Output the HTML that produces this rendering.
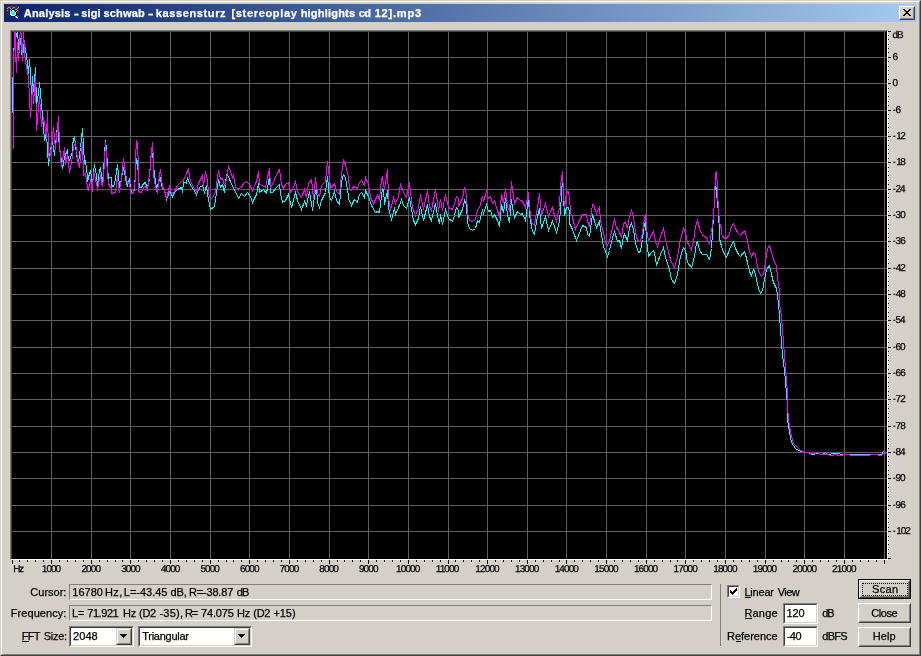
<!DOCTYPE html><html><head><meta charset="utf-8"><title>Analysis</title><style>
html,body{margin:0;padding:0}
body{width:921px;height:656px;background:#d4d0c8;position:relative;overflow:hidden;
 font-family:"Liberation Sans",sans-serif;font-size:11px;color:#000;line-height:13px}
div,span{position:absolute;box-sizing:border-box;white-space:pre}
.t{height:13px;line-height:13px;-webkit-text-stroke:0.25px currentColor}
u{text-decoration:none;border-bottom:1px solid #000;display:inline-block;height:13px;line-height:13px}
.sunk1{border:1px solid;border-color:#808080 #fff #fff #808080;background:#d4d0c8}
.sunk2{border:1px solid;border-color:#808080 #fff #fff #808080;background:#fff}
.sunk2:before{content:"";position:absolute;left:0;top:0;right:0;bottom:0;border:1px solid;border-color:#404040 #d4d0c8 #d4d0c8 #404040}
.btn{border:1px solid;border-color:#fff #404040 #404040 #fff;background:#d4d0c8;text-align:center}
.btn:before{content:"";position:absolute;left:0;top:0;right:0;bottom:0;border:1px solid;border-color:#d4d0c8 #808080 #808080 #d4d0c8}
.cbtn{border:1px solid;border-color:#d4d0c8 #404040 #404040 #d4d0c8;background:#d4d0c8}
.cbtn:before{content:"";position:absolute;left:0;top:0;right:0;bottom:0;border:1px solid;border-color:#fff #808080 #808080 #fff}
.arr{width:0;height:0;border-left:4px solid transparent;border-right:4px solid transparent;border-top:4px solid #000}
</style></head><body><div id="w" style="left:0;top:0;width:921px;height:656px;will-change:transform">
<div style="left:0;top:0;width:921px;height:656px;border:1px solid;border-color:#d4d0c8 #404040 #404040 #d4d0c8"></div>
<div style="left:1px;top:1px;width:919px;height:654px;border:1px solid;border-color:#fff #808080 #808080 #fff"></div>
<div style="left:4px;top:4px;width:913px;height:18px;background:linear-gradient(to right,#0a246a,#a6caf0)"></div>
<div id="title" style="left:0;top:0"><span class="t" style="left:23.83px;top:7px;letter-spacing:0.183px;font-weight:bold;color:#fff;">Analysis</span> <span class="t" style="left:73.73px;top:7px;letter-spacing:0.000px;font-weight:bold;color:#fff;transform:scaleX(1.325);transform-origin:0 0;">-</span> <span class="t" style="left:81.21px;top:7px;letter-spacing:0.139px;font-weight:bold;color:#fff;">sigi</span> <span class="t" style="left:103.51px;top:7px;letter-spacing:0.158px;font-weight:bold;color:#fff;">schwab</span> <span class="t" style="left:147.77px;top:7px;letter-spacing:0.000px;font-weight:bold;color:#fff;transform:scaleX(1.468);transform-origin:0 0;">-</span> <span class="t" style="left:155.63px;top:7px;letter-spacing:0.638px;font-weight:bold;color:#fff;">kassensturz</span> <span class="t" style="left:231.48px;top:7px;letter-spacing:0.669px;font-weight:bold;color:#fff;">[stereoplay</span> <span class="t" style="left:300.63px;top:7px;letter-spacing:0.208px;font-weight:bold;color:#fff;">highlights</span> <span class="t" style="left:358.77px;top:7px;letter-spacing:-0.582px;font-weight:bold;color:#fff;">cd</span> <span class="t" style="left:374.71px;top:7px;letter-spacing:0.803px;font-weight:bold;color:#fff;">12].mp3</span></div>
<svg style="position:absolute;left:6px;top:5px" width="16" height="16" viewBox="6 5 16 16" shape-rendering="crispEdges"><path d="M7 6h1v1h-1zM7 7h1v1h-1zM7 9h1v1h-1zM7 11h1v1h-1zM7 12h1v1h-1zM7 13h1v1h-1zM8 6h1v1h-1zM8 8h1v1h-1zM8 9h1v1h-1zM8 10h1v1h-1zM8 11h1v1h-1zM8 12h1v1h-1zM8 13h1v1h-1zM9 6h1v1h-1zM9 8h1v1h-1zM9 9h1v1h-1zM9 10h1v1h-1zM10 6h1v1h-1zM10 7h1v1h-1zM10 9h1v1h-1zM11 6h1v1h-1zM11 7h1v1h-1zM11 8h1v1h-1zM12 6h1v1h-1zM12 7h1v1h-1zM13 6h1v1h-1zM13 8h1v1h-1zM14 6h1v1h-1zM14 8h1v1h-1zM14 9h1v1h-1zM15 6h1v1h-1zM15 7h1v1h-1zM15 8h1v1h-1zM15 10h1v1h-1zM16 6h1v1h-1zM16 7h1v1h-1zM16 8h1v1h-1zM16 10h1v1h-1zM17 6h1v1h-1zM17 7h1v1h-1zM17 9h1v1h-1zM17 11h1v1h-1zM17 12h1v1h-1zM17 13h1v1h-1zM18 6h1v1h-1zM18 8h1v1h-1zM18 9h1v1h-1zM18 10h1v1h-1zM18 11h1v1h-1zM18 12h1v1h-1zM18 13h1v1h-1z" fill="#800080"/><path d="M7 8h1v1h-1zM7 10h1v1h-1zM8 7h1v1h-1zM9 7h1v1h-1zM10 8h1v1h-1zM10 10h1v1h-1zM11 9h1v1h-1zM12 8h1v1h-1zM13 7h1v1h-1zM14 7h1v1h-1zM15 9h1v1h-1zM16 9h1v1h-1zM16 11h1v1h-1zM17 8h1v1h-1zM17 10h1v1h-1zM18 7h1v1h-1z" fill="#00ff00"/><path d="M9 11h1v1h-1zM9 12h1v1h-1zM9 13h1v1h-1zM10 15h1v1h-1zM11 10h1v1h-1zM11 16h1v1h-1zM12 9h1v1h-1zM12 16h1v1h-1zM13 9h1v1h-1zM13 16h1v1h-1zM14 10h1v1h-1zM14 16h1v1h-1zM15 11h1v1h-1zM16 12h1v1h-1zM16 13h1v1h-1zM16 14h1v1h-1z" fill="#000000"/><path d="M10 11h1v1h-1zM10 12h1v1h-1zM10 13h1v1h-1zM10 14h1v1h-1zM11 14h1v1h-1zM11 15h1v1h-1zM12 10h1v1h-1zM12 15h1v1h-1zM13 10h1v1h-1zM13 11h1v1h-1zM13 15h1v1h-1zM14 15h1v1h-1zM15 12h1v1h-1zM15 13h1v1h-1zM15 14h1v1h-1zM16 17h1v1h-1zM17 17h1v1h-1z" fill="#ffffff"/><path d="M11 11h1v1h-1zM11 12h1v1h-1zM11 13h1v1h-1zM12 11h1v1h-1zM12 12h1v1h-1zM12 13h1v1h-1zM12 14h1v1h-1zM13 12h1v1h-1zM13 13h1v1h-1zM13 14h1v1h-1zM14 11h1v1h-1zM14 12h1v1h-1zM14 13h1v1h-1zM14 14h1v1h-1zM15 16h1v1h-1zM16 16h1v1h-1z" fill="#00ffff"/><path d="M15 15h1v1h-1z" fill="#0000ff"/><path d="M15 17h1v1h-1zM17 15h1v1h-1zM17 18h1v1h-1zM18 16h1v1h-1z" fill="#a000a0"/></svg>
<div class="btn" style="left:899px;top:6px;width:16px;height:14px"></div>
<svg style="position:absolute;left:903px;top:9px" width="8" height="7" viewBox="0 0 8 7" shape-rendering="crispEdges"><path d="M0 0h2v1h1v1h2v-1h1v-1h2v1h-1v1h-1v1h-1v1h1v1h1v1h1v1h-2v-1h-1v-1h-2v1h-1v1h-2v-1h1v-1h1v-1h1v-1h-1v-1h-1v-1h-1z" fill="#000"/></svg>
<div style="left:10px;top:30px;width:878px;height:530px;background:#000;border:1px solid;border-color:#808080 #fff #fff #808080"></div>
<div style="left:11px;top:31px;width:876px;height:528px;border:1px solid;border-color:#404040 #000 #000 #404040"></div>
<svg style="position:absolute;left:12px;top:32px" width="875" height="527" viewBox="12 32 875 527"><path d="M51.5 32V559M91.5 32V559M130.5 32V559M170.5 32V559M210.5 32V559M249.5 32V559M289.5 32V559M329.5 32V559M368.5 32V559M408.5 32V559M448.5 32V559M487.5 32V559M527.5 32V559M566.5 32V559M606.5 32V559M646.5 32V559M685.5 32V559M725.5 32V559M765.5 32V559M804.5 32V559M844.5 32V559M884.5 32V559M12 57.5H887M12 83.5H887M12 110.5H887M12 136.5H887M12 162.5H887M12 189.5H887M12 215.5H887M12 241.5H887M12 268.5H887M12 294.5H887M12 320.5H887M12 347.5H887M12 373.5H887M12 399.5H887M12 426.5H887M12 452.5H887M12 478.5H887M12 505.5H887M12 531.5H887" stroke="#606060" stroke-width="1" fill="none" shape-rendering="crispEdges"/><path d="M12.5 112.5 L12.5 101.5 L12.5 101.5 L13.5 53.5 L13.5 50.5 L14.5 45.5 L15.5 33.5 L16.5 36.5 L17.5 30.5 L18.5 46.5 L19.5 52.5 L20.5 38.5 L21.5 48.5 L22.5 60.5 L23.5 45.5 L24.5 43.5 L25.5 49.5 L26.5 55.5 L27.5 64.5 L28.5 73.5 L29.5 59.5 L30.5 73.5 L31.5 95.5 L32.5 76.5 L33.5 91.5 L34.5 81.5 L35.5 67.5 L36.5 105.5 L38.5 93.5 L39.5 82.5 L41.5 104.5 L43.5 127.5 L44.5 140.5 L46.5 133.5 L47.5 150.5 L48.5 165.5 L50.5 149.5 L52.5 141.5 L54.5 155.5 L57.5 125.5 L59.5 147.5 L62.5 168.5 L64.5 157.5 L67.5 149.5 L68.5 162.5 L70.5 157.5 L72.5 151.5 L72.5 144.5 L74.5 136.5 L76.5 154.5 L78.5 162.5 L80.5 147.5 L82.5 128.5 L84.5 163.5 L85.5 160.5 L86.5 169.5 L87.5 176.5 L87.5 181.5 L89.5 173.5 L90.5 171.5 L91.5 176.5 L92.5 186.5 L93.5 172.5 L94.5 164.5 L95.5 170.5 L96.5 175.5 L97.5 185.5 L98.5 178.5 L99.5 170.5 L100.5 167.5 L101.5 176.5 L102.5 182.5 L103.5 172.5 L104.5 154.5 L105.5 140.5 L106.5 149.5 L107.5 166.5 L108.5 178.5 L109.5 177.5 L111.5 177.5 L111.5 185.5 L113.5 186.5 L114.5 183.5 L115.5 178.5 L117.5 164.5 L118.5 174.5 L119.5 187.5 L120.5 184.5 L121.5 177.5 L123.5 168.5 L124.5 171.5 L125.5 178.5 L127.5 186.5 L128.5 181.5 L129.5 179.5 L130.5 187.5 L131.5 192.5 L134.5 191.5 L135.5 169.5 L136.5 158.5 L137.5 161.5 L138.5 178.5 L139.5 187.5 L141.5 187.5 L143.5 183.5 L145.5 182.5 L146.5 186.5 L148.5 184.5 L149.5 178.5 L150.5 162.5 L151.5 150.5 L153.5 160.5 L153.5 164.5 L154.5 174.5 L155.5 181.5 L156.5 187.5 L158.5 183.5 L159.5 178.5 L160.5 177.5 L161.5 185.5 L163.5 189.5 L164.5 190.5 L166.5 199.5 L169.5 191.5 L172.5 196.5 L174.5 192.5 L177.5 189.5 L181.5 187.5 L182.5 192.5 L183.5 181.5 L186.5 183.5 L187.5 177.5 L189.5 183.5 L193.5 189.5 L196.5 194.5 L199.5 187.5 L202.5 185.5 L204.5 192.5 L206.5 185.5 L207.5 194.5 L210.5 209.5 L214.5 206.5 L216.5 192.5 L218.5 179.5 L220.5 187.5 L222.5 184.5 L224.5 192.5 L226.5 174.5 L228.5 176.5 L231.5 184.5 L233.5 187.5 L235.5 192.5 L238.5 197.5 L238.5 198.5 L241.5 193.5 L244.5 196.5 L247.5 192.5 L250.5 196.5 L252.5 202.5 L256.5 194.5 L258.5 183.5 L259.5 192.5 L263.5 189.5 L266.5 193.5 L269.5 176.5 L270.5 192.5 L272.5 192.5 L276.5 187.5 L279.5 184.5 L280.5 193.5 L282.5 202.5 L285.5 200.5 L288.5 194.5 L291.5 207.5 L295.5 192.5 L297.5 200.5 L301.5 209.5 L304.5 201.5 L306.5 205.5 L309.5 191.5 L312.5 210.5 L314.5 196.5 L316.5 187.5 L317.5 202.5 L319.5 207.5 L321.5 200.5 L325.5 192.5 L327.5 176.5 L329.5 197.5 L331.5 200.5 L334.5 191.5 L336.5 200.5 L339.5 204.5 L341.5 181.5 L343.5 174.5 L345.5 177.5 L348.5 196.5 L348.5 198.5 L351.5 205.5 L354.5 199.5 L357.5 202.5 L359.5 194.5 L361.5 192.5 L364.5 197.5 L365.5 190.5 L368.5 196.5 L371.5 205.5 L375.5 212.5 L377.5 211.5 L379.5 212.5 L382.5 188.5 L383.5 189.5 L384.5 204.5 L387.5 190.5 L388.5 207.5 L391.5 220.5 L394.5 207.5 L395.5 214.5 L399.5 205.5 L401.5 199.5 L403.5 205.5 L406.5 208.5 L409.5 197.5 L411.5 209.5 L413.5 220.5 L415.5 224.5 L418.5 218.5 L420.5 206.5 L423.5 220.5 L427.5 204.5 L429.5 216.5 L431.5 220.5 L435.5 203.5 L437.5 216.5 L439.5 223.5 L440.5 214.5 L442.5 224.5 L445.5 209.5 L448.5 218.5 L452.5 221.5 L454.5 215.5 L456.5 207.5 L458.5 210.5 L458.5 217.5 L461.5 211.5 L462.5 209.5 L464.5 200.5 L466.5 204.5 L467.5 222.5 L469.5 228.5 L472.5 230.5 L475.5 228.5 L477.5 220.5 L479.5 222.5 L482.5 210.5 L483.5 213.5 L486.5 204.5 L488.5 211.5 L490.5 210.5 L492.5 217.5 L494.5 214.5 L497.5 220.5 L499.5 226.5 L501.5 204.5 L503.5 212.5 L505.5 198.5 L507.5 215.5 L509.5 222.5 L511.5 199.5 L512.5 207.5 L514.5 217.5 L517.5 211.5 L520.5 214.5 L522.5 213.5 L525.5 220.5 L528.5 198.5 L529.5 215.5 L532.5 231.5 L534.5 234.5 L537.5 216.5 L539.5 208.5 L541.5 228.5 L545.5 216.5 L548.5 230.5 L552.5 221.5 L554.5 226.5 L556.5 232.5 L559.5 221.5 L561.5 195.5 L562.5 177.5 L563.5 195.5 L564.5 215.5 L566.5 207.5 L568.5 207.5 L569.5 212.5 L569.5 223.5 L572.5 229.5 L576.5 240.5 L578.5 235.5 L582.5 225.5 L586.5 227.5 L587.5 234.5 L589.5 236.5 L591.5 221.5 L592.5 214.5 L596.5 227.5 L599.5 221.5 L600.5 229.5 L602.5 240.5 L603.5 246.5 L607.5 256.5 L609.5 250.5 L612.5 237.5 L614.5 231.5 L617.5 241.5 L619.5 240.5 L621.5 248.5 L623.5 236.5 L624.5 234.5 L627.5 240.5 L629.5 227.5 L631.5 223.5 L633.5 229.5 L635.5 243.5 L638.5 252.5 L640.5 251.5 L642.5 239.5 L644.5 223.5 L645.5 222.5 L646.5 239.5 L648.5 256.5 L651.5 252.5 L653.5 250.5 L655.5 257.5 L656.5 265.5 L660.5 254.5 L663.5 247.5 L665.5 257.5 L669.5 269.5 L671.5 279.5 L674.5 283.5 L677.5 274.5 L680.5 256.5 L683.5 247.5 L685.5 250.5 L687.5 262.5 L691.5 267.5 L694.5 256.5 L696.5 242.5 L697.5 241.5 L699.5 250.5 L702.5 254.5 L706.5 254.5 L709.5 259.5 L711.5 248.5 L712.5 232.5 L714.5 200.5 L715.5 180.5 L716.5 192.5 L718.5 212.5 L719.5 232.5 L719.5 238.5 L721.5 246.5 L723.5 252.5 L726.5 257.5 L729.5 249.5 L731.5 244.5 L733.5 241.5 L735.5 248.5 L738.5 254.5 L740.5 256.5 L744.5 251.5 L745.5 254.5 L747.5 262.5 L749.5 271.5 L751.5 275.5 L753.5 269.5 L754.5 270.5 L756.5 279.5 L758.5 288.5 L760.5 293.5 L762.5 290.5 L764.5 279.5 L766.5 269.5 L769.5 265.5 L771.5 274.5 L773.5 282.5 L776.5 288.5 L778.5 303.5 L779.5 316.5 L780.5 329.5 L781.5 342.5 L782.5 355.5 L784.5 370.5 L786.5 393.5 L787.5 406.5 L787.5 419.5 L789.5 432.5 L791.5 442.5 L795.5 448.5 L800.5 451.5 L807.5 452.5 L812.5 454.5 L816.5 453.5 L822.5 454.5 L825.5 452.5 L827.5 454.5 L835.5 453.5 L843.5 454.5 L851.5 454.5 L859.5 454.5 L867.5 454.5 L876.5 454.5 L881.5 454.5 L883.5 451.5 L885.5 454.5" stroke="#00ffff" stroke-width="1" fill="none" stroke-linejoin="miter" shape-rendering="crispEdges"/><path d="M13.5 149.5 L14.5 -40.5 L15.5 50.5 L16.5 72.5 L17.5 42.5 L18.5 60.5 L19.5 44.5 L20.5 26.5 L21.5 38.5 L22.5 60.5 L23.5 26.5 L24.5 52.5 L25.5 60.5 L26.5 66.5 L27.5 72.5 L28.5 77.5 L29.5 98.5 L30.5 117.5 L32.5 86.5 L33.5 103.5 L35.5 75.5 L36.5 130.5 L39.5 96.5 L41.5 126.5 L43.5 117.5 L44.5 123.5 L46.5 138.5 L47.5 110.5 L48.5 153.5 L49.5 159.5 L51.5 147.5 L53.5 127.5 L55.5 149.5 L56.5 137.5 L58.5 116.5 L59.5 147.5 L61.5 166.5 L64.5 147.5 L65.5 164.5 L67.5 154.5 L69.5 172.5 L71.5 162.5 L73.5 147.5 L75.5 142.5 L77.5 159.5 L79.5 167.5 L80.5 157.5 L82.5 142.5 L83.5 175.5 L85.5 173.5 L86.5 180.5 L87.5 187.5 L88.5 189.5 L90.5 180.5 L91.5 183.5 L92.5 191.5 L92.5 188.5 L93.5 172.5 L94.5 173.5 L95.5 180.5 L97.5 187.5 L97.5 190.5 L98.5 183.5 L100.5 174.5 L101.5 183.5 L102.5 186.5 L103.5 177.5 L104.5 160.5 L105.5 142.5 L106.5 157.5 L107.5 173.5 L108.5 183.5 L110.5 187.5 L111.5 186.5 L111.5 193.5 L115.5 192.5 L116.5 183.5 L117.5 175.5 L118.5 187.5 L119.5 192.5 L120.5 187.5 L121.5 177.5 L122.5 168.5 L123.5 158.5 L124.5 164.5 L125.5 172.5 L126.5 178.5 L127.5 183.5 L129.5 182.5 L130.5 190.5 L131.5 193.5 L133.5 192.5 L135.5 178.5 L135.5 158.5 L136.5 140.5 L137.5 143.5 L138.5 167.5 L138.5 190.5 L139.5 192.5 L141.5 192.5 L143.5 187.5 L144.5 186.5 L146.5 187.5 L147.5 190.5 L149.5 174.5 L150.5 163.5 L151.5 151.5 L152.5 142.5 L153.5 160.5 L153.5 173.5 L154.5 181.5 L156.5 190.5 L157.5 192.5 L158.5 183.5 L159.5 174.5 L160.5 169.5 L161.5 178.5 L162.5 186.5 L164.5 190.5 L166.5 198.5 L169.5 186.5 L171.5 193.5 L174.5 191.5 L177.5 185.5 L183.5 179.5 L185.5 176.5 L188.5 168.5 L189.5 177.5 L191.5 183.5 L194.5 188.5 L196.5 191.5 L198.5 183.5 L200.5 179.5 L202.5 175.5 L203.5 185.5 L205.5 171.5 L207.5 180.5 L208.5 193.5 L210.5 199.5 L213.5 196.5 L215.5 191.5 L218.5 170.5 L220.5 179.5 L222.5 178.5 L224.5 185.5 L225.5 184.5 L228.5 166.5 L230.5 171.5 L232.5 177.5 L233.5 174.5 L235.5 187.5 L238.5 188.5 L241.5 187.5 L243.5 183.5 L246.5 181.5 L249.5 184.5 L252.5 190.5 L256.5 181.5 L258.5 171.5 L259.5 184.5 L262.5 185.5 L265.5 187.5 L269.5 168.5 L270.5 187.5 L272.5 184.5 L276.5 174.5 L279.5 169.5 L281.5 184.5 L283.5 188.5 L285.5 184.5 L288.5 182.5 L290.5 192.5 L293.5 187.5 L295.5 181.5 L297.5 191.5 L299.5 194.5 L301.5 197.5 L304.5 189.5 L306.5 197.5 L308.5 183.5 L311.5 179.5 L313.5 198.5 L315.5 177.5 L317.5 193.5 L319.5 196.5 L321.5 185.5 L325.5 181.5 L327.5 161.5 L329.5 177.5 L330.5 188.5 L334.5 183.5 L336.5 191.5 L339.5 194.5 L341.5 174.5 L343.5 160.5 L345.5 164.5 L348.5 177.5 L349.5 188.5 L351.5 190.5 L353.5 186.5 L357.5 188.5 L359.5 182.5 L361.5 180.5 L364.5 185.5 L365.5 177.5 L368.5 184.5 L370.5 197.5 L373.5 203.5 L377.5 195.5 L379.5 199.5 L381.5 179.5 L382.5 177.5 L384.5 189.5 L387.5 169.5 L388.5 197.5 L390.5 210.5 L393.5 197.5 L395.5 203.5 L398.5 196.5 L400.5 184.5 L403.5 192.5 L406.5 197.5 L409.5 182.5 L410.5 192.5 L412.5 207.5 L415.5 215.5 L418.5 207.5 L420.5 194.5 L423.5 209.5 L427.5 190.5 L429.5 206.5 L431.5 210.5 L435.5 189.5 L437.5 202.5 L438.5 211.5 L440.5 199.5 L442.5 210.5 L445.5 194.5 L448.5 207.5 L452.5 209.5 L454.5 203.5 L456.5 196.5 L458.5 198.5 L458.5 206.5 L461.5 200.5 L462.5 198.5 L464.5 187.5 L466.5 194.5 L467.5 213.5 L469.5 220.5 L472.5 221.5 L475.5 219.5 L477.5 209.5 L479.5 207.5 L482.5 196.5 L483.5 201.5 L486.5 191.5 L488.5 198.5 L490.5 196.5 L492.5 203.5 L494.5 200.5 L496.5 207.5 L499.5 217.5 L501.5 194.5 L503.5 202.5 L505.5 188.5 L507.5 206.5 L509.5 211.5 L511.5 181.5 L512.5 189.5 L514.5 203.5 L517.5 197.5 L520.5 200.5 L522.5 201.5 L525.5 207.5 L528.5 192.5 L529.5 207.5 L531.5 222.5 L534.5 225.5 L537.5 207.5 L539.5 193.5 L541.5 215.5 L545.5 203.5 L548.5 216.5 L552.5 207.5 L554.5 215.5 L556.5 221.5 L559.5 207.5 L560.5 185.5 L562.5 171.5 L563.5 194.5 L564.5 207.5 L566.5 192.5 L568.5 191.5 L569.5 197.5 L570.5 212.5 L572.5 217.5 L575.5 229.5 L578.5 222.5 L582.5 214.5 L586.5 214.5 L587.5 221.5 L589.5 225.5 L592.5 204.5 L593.5 204.5 L596.5 213.5 L599.5 206.5 L600.5 221.5 L603.5 232.5 L606.5 246.5 L609.5 241.5 L612.5 227.5 L614.5 218.5 L616.5 228.5 L618.5 229.5 L621.5 237.5 L623.5 223.5 L625.5 222.5 L627.5 228.5 L629.5 216.5 L631.5 210.5 L633.5 216.5 L635.5 232.5 L637.5 240.5 L640.5 241.5 L642.5 232.5 L644.5 218.5 L645.5 214.5 L646.5 229.5 L648.5 240.5 L651.5 235.5 L653.5 231.5 L655.5 241.5 L657.5 246.5 L660.5 236.5 L663.5 228.5 L665.5 239.5 L668.5 252.5 L671.5 262.5 L674.5 267.5 L677.5 257.5 L680.5 239.5 L683.5 228.5 L685.5 232.5 L687.5 242.5 L691.5 249.5 L693.5 241.5 L695.5 226.5 L697.5 220.5 L699.5 228.5 L702.5 235.5 L705.5 236.5 L709.5 243.5 L711.5 232.5 L713.5 216.5 L714.5 200.5 L715.5 172.5 L716.5 171.5 L717.5 188.5 L718.5 212.5 L720.5 227.5 L721.5 227.5 L721.5 234.5 L725.5 239.5 L729.5 234.5 L731.5 226.5 L733.5 223.5 L735.5 228.5 L737.5 232.5 L740.5 235.5 L744.5 230.5 L745.5 232.5 L747.5 241.5 L749.5 251.5 L751.5 256.5 L753.5 252.5 L755.5 254.5 L757.5 266.5 L759.5 273.5 L761.5 276.5 L763.5 274.5 L765.5 261.5 L767.5 248.5 L769.5 245.5 L771.5 252.5 L773.5 259.5 L776.5 266.5 L777.5 277.5 L779.5 291.5 L779.5 303.5 L781.5 316.5 L782.5 329.5 L783.5 342.5 L784.5 355.5 L785.5 368.5 L787.5 393.5 L787.5 406.5 L788.5 419.5 L790.5 432.5 L793.5 443.5 L800.5 450.5 L805.5 452.5 L813.5 453.5 L817.5 452.5 L820.5 454.5 L826.5 454.5 L831.5 455.5 L835.5 454.5 L839.5 455.5 L846.5 454.5 L853.5 455.5 L865.5 455.5 L874.5 454.5 L881.5 455.5 L884.5 452.5 L885.5 454.5" stroke="#ff00ff" stroke-width="1" fill="none" stroke-linejoin="miter" shape-rendering="crispEdges"/></svg>
<svg style="position:absolute;left:0;top:0" width="921" height="656" shape-rendering="crispEdges"><path d="M888 31.5h3M888 35.5h1M888 39.5h1M888 44.5h1M888 48.5h1M888 52.5h1M888 57.5h3M888 61.5h1M888 66.5h1M888 70.5h1M888 74.5h1M888 79.5h1M888 83.5h3M888 88.5h1M888 92.5h1M888 96.5h1M888 101.5h1M888 105.5h1M888 110.5h3M888 114.5h1M888 118.5h1M888 123.5h1M888 127.5h1M888 132.5h1M888 136.5h3M888 140.5h1M888 145.5h1M888 149.5h1M888 153.5h1M888 158.5h1M888 162.5h3M888 167.5h1M888 171.5h1M888 175.5h1M888 180.5h1M888 184.5h1M888 189.5h3M888 193.5h1M888 197.5h1M888 202.5h1M888 206.5h1M888 211.5h1M888 215.5h3M888 219.5h1M888 224.5h1M888 228.5h1M888 233.5h1M888 237.5h1M888 241.5h3M888 246.5h1M888 250.5h1M888 254.5h1M888 259.5h1M888 263.5h1M888 268.5h3M888 272.5h1M888 276.5h1M888 281.5h1M888 285.5h1M888 290.5h1M888 294.5h3M888 298.5h1M888 303.5h1M888 307.5h1M888 312.5h1M888 316.5h1M888 320.5h3M888 325.5h1M888 329.5h1M888 334.5h1M888 338.5h1M888 342.5h1M888 347.5h3M888 351.5h1M888 355.5h1M888 360.5h1M888 364.5h1M888 369.5h1M888 373.5h3M888 377.5h1M888 382.5h1M888 386.5h1M888 391.5h1M888 395.5h1M888 399.5h3M888 404.5h1M888 408.5h1M888 413.5h1M888 417.5h1M888 421.5h1M888 426.5h3M888 430.5h1M888 435.5h1M888 439.5h1M888 443.5h1M888 448.5h1M888 452.5h3M888 456.5h1M888 461.5h1M888 465.5h1M888 470.5h1M888 474.5h1M888 478.5h3M888 483.5h1M888 487.5h1M888 492.5h1M888 496.5h1M888 500.5h1M888 505.5h3M888 509.5h1M888 514.5h1M888 518.5h1M888 522.5h1M888 527.5h1M888 531.5h3M888 536.5h1M888 540.5h1M888 544.5h1M888 549.5h1M888 553.5h1M888 558.5h3M12.5 560v4M19.5 560v2M27.5 560v2M35.5 560v2M43.5 560v2M51.5 560v4M59.5 560v2M67.5 560v2M75.5 560v2M83.5 560v2M91.5 560v4M99.5 560v2M107.5 560v2M115.5 560v2M122.5 560v2M130.5 560v4M138.5 560v2M146.5 560v2M154.5 560v2M162.5 560v2M170.5 560v4M178.5 560v2M186.5 560v2M194.5 560v2M202.5 560v2M210.5 560v4M218.5 560v2M226.5 560v2M233.5 560v2M241.5 560v2M249.5 560v4M257.5 560v2M265.5 560v2M273.5 560v2M281.5 560v2M289.5 560v4M297.5 560v2M305.5 560v2M313.5 560v2M321.5 560v2M329.5 560v4M337.5 560v2M344.5 560v2M352.5 560v2M360.5 560v2M368.5 560v4M376.5 560v2M384.5 560v2M392.5 560v2M400.5 560v2M408.5 560v4M416.5 560v2M424.5 560v2M432.5 560v2M440.5 560v2M448.5 560v4M455.5 560v2M463.5 560v2M471.5 560v2M479.5 560v2M487.5 560v4M495.5 560v2M503.5 560v2M511.5 560v2M519.5 560v2M527.5 560v4M535.5 560v2M543.5 560v2M551.5 560v2M559.5 560v2M566.5 560v4M574.5 560v2M582.5 560v2M590.5 560v2M598.5 560v2M606.5 560v4M614.5 560v2M622.5 560v2M630.5 560v2M638.5 560v2M646.5 560v4M654.5 560v2M662.5 560v2M670.5 560v2M677.5 560v2M685.5 560v4M693.5 560v2M701.5 560v2M709.5 560v2M717.5 560v2M725.5 560v4M733.5 560v2M741.5 560v2M749.5 560v2M757.5 560v2M765.5 560v4M773.5 560v2M781.5 560v2M788.5 560v2M796.5 560v2M804.5 560v4M812.5 560v2M820.5 560v2M828.5 560v2M836.5 560v2M844.5 560v4M852.5 560v2M860.5 560v2M868.5 560v2M876.5 560v2M884.5 560v4" stroke="#000" stroke-width="1" fill="none"/></svg>
<span class="t" style="left:892.38px;top:29px;letter-spacing:-0.884px;font-size:10px;text-rendering:geometricPrecision;">dB</span>
<span class="t" style="left:892.49px;top:51px;letter-spacing:0.000px;font-size:10px;text-rendering:geometricPrecision;">6</span>
<span class="t" style="left:892.61px;top:77px;letter-spacing:0.000px;font-size:10px;text-rendering:geometricPrecision;">0</span>
<span class="t" style="left:892.65px;top:104px;letter-spacing:0.000px;font-size:10px;text-rendering:geometricPrecision;transform:scaleX(0.778);transform-origin:0 0;">-</span> <span class="t" style="left:895.39px;top:104px;letter-spacing:0.000px;font-size:10px;text-rendering:geometricPrecision;">6</span>
<span class="t" style="left:892.65px;top:130px;letter-spacing:0.000px;font-size:10px;text-rendering:geometricPrecision;transform:scaleX(0.778);transform-origin:0 0;">-</span> <span class="t" style="left:896.14px;top:130px;letter-spacing:-1.458px;font-size:10px;text-rendering:geometricPrecision;">12</span>
<span class="t" style="left:892.65px;top:156px;letter-spacing:0.000px;font-size:10px;text-rendering:geometricPrecision;transform:scaleX(0.778);transform-origin:0 0;">-</span> <span class="t" style="left:896.14px;top:156px;letter-spacing:-1.527px;font-size:10px;text-rendering:geometricPrecision;">18</span>
<span class="t" style="left:892.65px;top:183px;letter-spacing:0.000px;font-size:10px;text-rendering:geometricPrecision;transform:scaleX(0.778);transform-origin:0 0;">-</span> <span class="t" style="left:895.40px;top:183px;letter-spacing:-0.927px;font-size:10px;text-rendering:geometricPrecision;">24</span>
<span class="t" style="left:892.65px;top:209px;letter-spacing:0.000px;font-size:10px;text-rendering:geometricPrecision;transform:scaleX(0.778);transform-origin:0 0;">-</span> <span class="t" style="left:895.52px;top:209px;letter-spacing:-0.952px;font-size:10px;text-rendering:geometricPrecision;">30</span>
<span class="t" style="left:892.65px;top:235px;letter-spacing:0.000px;font-size:10px;text-rendering:geometricPrecision;transform:scaleX(0.778);transform-origin:0 0;">-</span> <span class="t" style="left:895.52px;top:235px;letter-spacing:-0.903px;font-size:10px;text-rendering:geometricPrecision;">36</span>
<span class="t" style="left:892.65px;top:262px;letter-spacing:0.000px;font-size:10px;text-rendering:geometricPrecision;transform:scaleX(0.778);transform-origin:0 0;">-</span> <span class="t" style="left:895.67px;top:262px;letter-spacing:-0.991px;font-size:10px;text-rendering:geometricPrecision;">42</span>
<span class="t" style="left:892.65px;top:288px;letter-spacing:0.000px;font-size:10px;text-rendering:geometricPrecision;transform:scaleX(0.778);transform-origin:0 0;">-</span> <span class="t" style="left:895.67px;top:288px;letter-spacing:-1.059px;font-size:10px;text-rendering:geometricPrecision;">48</span>
<span class="t" style="left:892.65px;top:314px;letter-spacing:0.000px;font-size:10px;text-rendering:geometricPrecision;transform:scaleX(0.778);transform-origin:0 0;">-</span> <span class="t" style="left:895.50px;top:314px;letter-spacing:-1.030px;font-size:10px;text-rendering:geometricPrecision;">54</span>
<span class="t" style="left:892.65px;top:341px;letter-spacing:0.000px;font-size:10px;text-rendering:geometricPrecision;transform:scaleX(0.778);transform-origin:0 0;">-</span> <span class="t" style="left:895.39px;top:341px;letter-spacing:-0.825px;font-size:10px;text-rendering:geometricPrecision;">60</span>
<span class="t" style="left:892.65px;top:367px;letter-spacing:0.000px;font-size:10px;text-rendering:geometricPrecision;transform:scaleX(0.778);transform-origin:0 0;">-</span> <span class="t" style="left:895.39px;top:367px;letter-spacing:-0.776px;font-size:10px;text-rendering:geometricPrecision;">66</span>
<span class="t" style="left:892.65px;top:393px;letter-spacing:0.000px;font-size:10px;text-rendering:geometricPrecision;transform:scaleX(0.778);transform-origin:0 0;">-</span> <span class="t" style="left:895.39px;top:393px;letter-spacing:-0.707px;font-size:10px;text-rendering:geometricPrecision;">72</span>
<span class="t" style="left:892.65px;top:420px;letter-spacing:0.000px;font-size:10px;text-rendering:geometricPrecision;transform:scaleX(0.778);transform-origin:0 0;">-</span> <span class="t" style="left:895.39px;top:420px;letter-spacing:-0.776px;font-size:10px;text-rendering:geometricPrecision;">78</span>
<span class="t" style="left:892.65px;top:446px;letter-spacing:0.000px;font-size:10px;text-rendering:geometricPrecision;transform:scaleX(0.778);transform-origin:0 0;">-</span> <span class="t" style="left:895.47px;top:446px;letter-spacing:-0.996px;font-size:10px;text-rendering:geometricPrecision;">84</span>
<span class="t" style="left:892.65px;top:472px;letter-spacing:0.000px;font-size:10px;text-rendering:geometricPrecision;transform:scaleX(0.778);transform-origin:0 0;">-</span> <span class="t" style="left:895.43px;top:472px;letter-spacing:-0.864px;font-size:10px;text-rendering:geometricPrecision;">90</span>
<span class="t" style="left:892.65px;top:499px;letter-spacing:0.000px;font-size:10px;text-rendering:geometricPrecision;transform:scaleX(0.778);transform-origin:0 0;">-</span> <span class="t" style="left:895.43px;top:499px;letter-spacing:-0.815px;font-size:10px;text-rendering:geometricPrecision;">96</span>
<span class="t" style="left:892.65px;top:525px;letter-spacing:0.000px;font-size:10px;text-rendering:geometricPrecision;transform:scaleX(0.778);transform-origin:0 0;">-</span> <span class="t" style="left:896.14px;top:525px;letter-spacing:-1.010px;font-size:10px;text-rendering:geometricPrecision;">102</span>
<span class="t" style="left:13.18px;top:563px;letter-spacing:-1.403px;font-size:10px;text-rendering:geometricPrecision;">Hz</span>
<span class="t" style="left:41.83px;top:563px;letter-spacing:-0.998px;font-size:10px;text-rendering:geometricPrecision;">1000</span>
<span class="t" style="left:81.43px;top:563px;letter-spacing:-0.884px;font-size:10px;text-rendering:geometricPrecision;">2000</span>
<span class="t" style="left:121.19px;top:563px;letter-spacing:-0.925px;font-size:10px;text-rendering:geometricPrecision;">3000</span>
<span class="t" style="left:160.98px;top:563px;letter-spacing:-0.975px;font-size:10px;text-rendering:geometricPrecision;">4000</span>
<span class="t" style="left:200.45px;top:563px;letter-spacing:-0.918px;font-size:10px;text-rendering:geometricPrecision;">5000</span>
<span class="t" style="left:239.98px;top:563px;letter-spacing:-0.883px;font-size:10px;text-rendering:geometricPrecision;">6000</span>
<span class="t" style="left:279.62px;top:563px;letter-spacing:-0.881px;font-size:10px;text-rendering:geometricPrecision;">7000</span>
<span class="t" style="left:319.34px;top:563px;letter-spacing:-0.907px;font-size:10px;text-rendering:geometricPrecision;">8000</span>
<span class="t" style="left:358.94px;top:563px;letter-spacing:-0.896px;font-size:10px;text-rendering:geometricPrecision;">9000</span>
<span class="t" style="left:396.09px;top:563px;letter-spacing:-0.889px;font-size:10px;text-rendering:geometricPrecision;">10000</span>
<span class="t" style="left:435.73px;top:563px;letter-spacing:-0.889px;font-size:10px;text-rendering:geometricPrecision;">11000</span>
<span class="t" style="left:475.37px;top:563px;letter-spacing:-0.889px;font-size:10px;text-rendering:geometricPrecision;">12000</span>
<span class="t" style="left:515.01px;top:563px;letter-spacing:-0.889px;font-size:10px;text-rendering:geometricPrecision;">13000</span>
<span class="t" style="left:554.65px;top:563px;letter-spacing:-0.889px;font-size:10px;text-rendering:geometricPrecision;">14000</span>
<span class="t" style="left:594.29px;top:563px;letter-spacing:-0.889px;font-size:10px;text-rendering:geometricPrecision;">15000</span>
<span class="t" style="left:633.93px;top:563px;letter-spacing:-0.889px;font-size:10px;text-rendering:geometricPrecision;">16000</span>
<span class="t" style="left:673.57px;top:563px;letter-spacing:-0.889px;font-size:10px;text-rendering:geometricPrecision;">17000</span>
<span class="t" style="left:713.21px;top:563px;letter-spacing:-0.889px;font-size:10px;text-rendering:geometricPrecision;">18000</span>
<span class="t" style="left:752.85px;top:563px;letter-spacing:-0.889px;font-size:10px;text-rendering:geometricPrecision;">19000</span>
<span class="t" style="left:792.45px;top:563px;letter-spacing:-0.804px;font-size:10px;text-rendering:geometricPrecision;">20000</span>
<span class="t" style="left:832.09px;top:563px;letter-spacing:-0.804px;font-size:10px;text-rendering:geometricPrecision;">21000</span>
<span class="t" style="left:30.34px;top:586px;letter-spacing:0.000px;">Cursor:</span>
<span class="t" style="left:10.80px;top:607px;letter-spacing:0.064px;">Frequency:</span>
<span class="t" style="left:21.70px;top:630px;letter-spacing:-0.701px;">FFT</span> <span class="t" style="left:43.80px;top:630px;letter-spacing:-0.313px;">Size:</span><div style="left:22px;top:641px;width:7px;height:1px;background:#000"></div>
<div class="sunk1" style="left:69px;top:584px;width:643px;height:16px"></div>
<span class="t" style="left:72.36px;top:586px;letter-spacing:-0.005px;">16780</span> <span class="t" style="left:104.90px;top:586px;letter-spacing:0.495px;">Hz,</span> <span class="t" style="left:123.80px;top:586px;letter-spacing:-0.010px;">L=-43.45</span> <span class="t" style="left:170.44px;top:586px;letter-spacing:-0.030px;">dB,</span> <span class="t" style="left:188.90px;top:586px;letter-spacing:-0.157px;">R=-38.87</span> <span class="t" style="left:236.64px;top:586px;letter-spacing:-0.713px;">dB</span>
<div class="sunk1" style="left:69px;top:605px;width:643px;height:16px"></div>
<span class="t" style="left:72.10px;top:607px;letter-spacing:-0.197px;">L=</span> <span class="t" style="left:87.24px;top:607px;letter-spacing:-0.429px;">71.921</span> <span class="t" style="left:123.10px;top:607px;letter-spacing:-0.194px;">Hz</span> <span class="t" style="left:139.02px;top:607px;letter-spacing:-0.295px;">(D2</span> <span class="t" style="left:159.41px;top:607px;letter-spacing:0.240px;">-35),</span> <span class="t" style="left:185.00px;top:607px;letter-spacing:-1.223px;">R=</span> <span class="t" style="left:200.94px;top:607px;letter-spacing:-0.144px;">74.075</span> <span class="t" style="left:237.10px;top:607px;letter-spacing:-0.294px;">Hz</span> <span class="t" style="left:253.32px;top:607px;letter-spacing:-0.295px;">(D2</span> <span class="t" style="left:273.46px;top:607px;letter-spacing:-0.068px;">+15)</span>
<div class="sunk2" style="left:69px;top:626px;width:65px;height:21px"></div>
<span class="t" style="left:73.05px;top:630px;letter-spacing:0.054px;">2048</span>
<div class="cbtn" style="left:116px;top:628px;width:16px;height:17px"></div>
<svg style="position:absolute;left:120px;top:634px" width="7" height="4" viewBox="0 0 7 4" shape-rendering="crispEdges"><path d="M0 0h7v1h-1v1h-1v1h-1v1h-1v-1h-1v-1h-1v-1h-1z" fill="#000"/></svg>
<div class="sunk2" style="left:138px;top:626px;width:114px;height:21px"></div>
<span class="t" style="left:142.25px;top:630px;letter-spacing:-0.266px;">Triangular</span>
<div class="cbtn" style="left:234px;top:628px;width:16px;height:17px"></div>
<svg style="position:absolute;left:238px;top:634px" width="7" height="4" viewBox="0 0 7 4" shape-rendering="crispEdges"><path d="M0 0h7v1h-1v1h-1v1h-1v1h-1v-1h-1v-1h-1v-1h-1z" fill="#000"/></svg>
<div style="left:720px;top:584px;width:1px;height:63px;background:#808080;border-bottom:1px solid #fff"></div>
<div class="sunk2" style="left:727px;top:585px;width:13px;height:13px"></div>
<svg style="position:absolute;left:730px;top:588px" width="7" height="7" viewBox="0 0 7 7" shape-rendering="crispEdges"><path d="M0 2v3M1 3v3M2 4v3M3 3v3M4 2v3M5 1v3M6 0v3" stroke="#000" stroke-width="1" transform="translate(0.5,0)"/></svg>
<span class="t" style="left:744.40px;top:586px;letter-spacing:-0.199px;">Linear</span> <span class="t" style="left:777.75px;top:586px;letter-spacing:-0.574px;">View</span><div style="left:745px;top:597px;width:6px;height:1px;background:#000"></div>
<span class="t" style="left:744.40px;top:607px;letter-spacing:0.194px;">Range</span><div style="left:745px;top:618px;width:7px;height:1px;background:#000"></div>
<span class="t" style="left:727.10px;top:630px;letter-spacing:-0.033px;">Reference</span><div style="left:736px;top:641px;width:5px;height:1px;background:#000"></div>
<div class="sunk2" style="left:783px;top:603px;width:35px;height:21px"></div>
<span class="t" style="left:786.46px;top:607px;letter-spacing:-0.143px;">120</span>
<div class="sunk2" style="left:783px;top:626px;width:35px;height:21px"></div>
<span class="t" style="left:786.52px;top:630px;letter-spacing:0.000px;transform:scaleX(0.782);transform-origin:0 0;">-</span> <span class="t" style="left:789.65px;top:630px;letter-spacing:-0.353px;">40</span>
<span class="t" style="left:822.34px;top:607px;letter-spacing:-1.213px;">dB</span>
<span class="t" style="left:822.34px;top:630px;letter-spacing:-0.781px;">dBFS</span>
<div style="left:858px;top:579px;width:53px;height:20px;border:1px solid #000"></div>
<div class="btn" style="left:859px;top:580px;width:51px;height:18px"></div>
<div style="left:862px;top:583px;width:46px;height:13px;border:1px dotted #000"></div>
<span class="t" style="left:872.10px;top:583px;letter-spacing:0.347px;">Scan</span>
<div class="btn" style="left:858px;top:603px;width:53px;height:20px"></div>
<span class="t" style="left:871.14px;top:607px;letter-spacing:-0.394px;">Close</span>
<div class="btn" style="left:858px;top:627px;width:53px;height:20px"></div>
<span class="t" style="left:872.80px;top:630px;letter-spacing:0.080px;">Help</span>
</div></body></html>
